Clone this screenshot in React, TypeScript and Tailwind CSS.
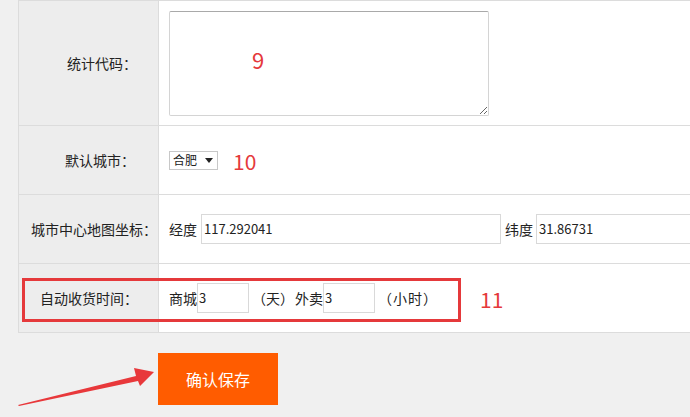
const font = { fontFamily: '"Noto Sans CJK SC", "Liberation Sans", sans-serif' };

const Label = ({ text, pr = "pr-[21px]" }: { text: string; pr?: string }) => (
  <div
    className={`flex w-[140px] shrink-0 items-center justify-end border-r border-[#dcdcdc] bg-[#ededed] text-[14px] text-[#222] ${pr}`}
  >
    {text}
  </div>
);

const Field = ({ value, w, pl = "pl-[2px]" }: { value: string; w: string; pl?: string }) => (
  <div
    className={`flex h-[30px] shrink-0 items-center border border-[#d9d9d9] bg-white text-[13px] text-[#222] ${w} ${pl}`}
  >
    {value}
  </div>
);

const App = () => {
  return (
    <div className="relative h-[417px] w-[690px] overflow-hidden bg-[#f0f0f0]" style={font}>
      <div className="ml-[18px] w-[720px] border-l border-[#dcdcdc]">
        {/* tail of the row above */}
        <div className="flex h-[1px] border-b border-[#dcdcdc]">
          <div className="w-[140px] border-r border-[#dcdcdc] bg-[#ededed]" />
          <div className="flex-1 bg-white" />
        </div>

        <div className="flex h-[125px] border-b border-[#dcdcdc]">
          <Label text="统计代码：" />
          <div className="flex-1 bg-white pl-[10px] pt-[10px]">
            <textarea className="h-[105px] w-[320px] resize rounded-[2px] border border-[#d4d4d4] border-t-[#a9a9a9] bg-white outline-none" />
          </div>
        </div>

        <div className="flex h-[69px] border-b border-[#dcdcdc]">
          <Label text="默认城市：" pr="pr-[23px]" />
          <div className="flex flex-1 items-center bg-white pl-[10px]">
            <div className="flex h-[19px] w-[49px] items-center border border-[#c8c8c8] bg-white pl-[3px] text-[12px] text-[#222]">
              合肥
              <svg width="8" height="5" viewBox="0 0 8 5" className="ml-[8px]">
                <path d="M0 0h8L4 5z" fill="#222" />
              </svg>
            </div>
          </div>
        </div>

        <div className="flex h-[69px] border-b border-[#dcdcdc]">
          <Label text="城市中心地图坐标：" pr="pr-[1px]" />
          <div className="flex flex-1 items-center bg-white pl-[10px] text-[14px] text-[#222]">
            <span>经度</span>
            <div className="ml-[4px]">
              <Field value="117.292041" w="w-[300px]" />
            </div>
            <span className="ml-[4px]">纬度</span>
            <div className="ml-[3px]">
              <Field value="31.86731" w="w-[200px]" />
            </div>
          </div>
        </div>

        <div className="flex h-[69px] border-b border-[#dcdcdc]">
          <Label text="自动收货时间：" pr="pr-[20px]" />
          <div className="flex flex-1 items-center bg-white pl-[10px] text-[14px] text-[#222]">
            <span>商城</span>
            <Field value="3" w="w-[52px]" pl="pl-[1px]" />
            <span className="ml-[3px]">（天）</span>
            <span className="ml-[1px]">外卖</span>
            <Field value="3" w="w-[52px]" pl="pl-[1px]" />
            <span className="ml-[3px] tracking-[1px]">（小时）</span>
          </div>
        </div>
      </div>

      <div className="ml-[158px] mt-[20px] flex h-[52px] w-[120px] items-center justify-center bg-[#ff5c00] text-[16px] text-white">
        确认保存
      </div>

      {/* annotations */}
      <div className="pointer-events-none absolute left-[22px] top-[278px] h-[44px] w-[439px] border-[3px] border-[#e5393b]" />
      <span className="absolute left-[252px] top-[48px] text-[22px] leading-none text-[#e5393b]">9</span>
      <span className="absolute left-[233px] top-[151px] text-[21px] leading-none text-[#e5393b]">10</span>
      <span className="absolute left-[480px] top-[289px] text-[21px] leading-none text-[#e5393b]">11</span>
      <svg className="absolute left-0 top-[360px]" width="160" height="57" viewBox="0 360 160 57">
        <path d="M18 405 L136 376 L134 368 L154 372 L140 386 L138 381 L19 406 Z" fill="#e8383b" />
      </svg>
    </div>
  );
};

export default App;
